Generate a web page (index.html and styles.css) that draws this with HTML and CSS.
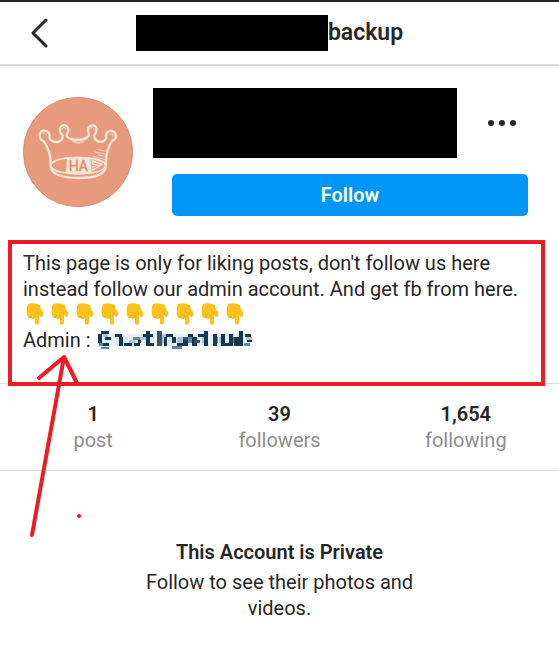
FILE: index.html
```html
<!DOCTYPE html>
<html lang="en">
<head>
    <meta charset="UTF-8">
    <meta name="viewport" content="width=device-width, initial-scale=1.0">
    <title>Profile</title>
    <link rel="stylesheet" href="styles.css">
</head>
<body>
    <header class="topbar">
        <button class="icon-btn back" aria-label="Back">
            <svg width="20" height="30" viewBox="0 0 20 30"><path d="M16 2 L3 15 L16 28" fill="none" stroke="#262626" stroke-width="3" stroke-linecap="round" stroke-linejoin="round"/></svg>
        </button>
        <h1 class="username"><span class="redacted redacted-user"></span>backup</h1>
    </header>

    <main class="profile">
        <section class="intro">
            <svg class="avatar" viewBox="38 38 330 330">
                <circle cx="203" cy="203" r="164" fill="#e89a7c" stroke="#c98369" stroke-width="2"/>
                <g fill="none" stroke="#f6e6d6" stroke-width="7" stroke-linecap="round" stroke-linejoin="round">
                    <path d="M121 240 C122 214 112 188 99 169 C85 166 84 142 99 139 C113 137 120 149 117 160 C124 176 151 178 157 159 C160 151 151 150 149 141 C145 119 173 116 174 136 C174 143 168 148 169 155 C178 170 222 170 236 154 C237 146 232 143 233 134 C237 117 263 121 258 140 C256 148 250 151 252 159 C260 178 281 176 288 160 C284 147 293 138 304 140 C320 143 320 165 306 169 C293 187 287 213 286 238"/>
                    <path d="M121 240 C117 271 158 281 205 281 C253 281 292 270 286 238"/>
                    <path d="M124 237 C139 222 169 220 203 220 C241 220 273 224 284 239" stroke-width="5"/>
                    <path d="M126 251 C140 273 262 276 284 249" stroke-width="5"/>
                </g>
                <path d="M170 219 Q205 215 241 220 L244 265 Q206 272 167 266 Z" fill="#f2e5d4"/>
                <path d="M134 249 Q145 233 164 228 L162 259 Q145 257 134 249 Z" fill="#e89a7c"/>
                <path d="M244 226 L280 240 L246 261 Z" fill="#f2e5d4"/>
                <g fill="none" stroke="#f6e6d6" stroke-width="2" stroke-linecap="round">
                    <path d="M260 195 L285 200 M254 203 L284 209 M264 211 L284 217 M249 217 L283 225 M243 225 L281 233 M180 166 Q204 183 229 164 M187 172 Q206 182 220 172 M94 149 Q102 140 108 153 M154 135 Q162 123 167 136 M241 133 Q249 124 252 138 M298 151 Q307 145 310 156"/>
                </g>
                <path d="M248 235 L270 242 M245 243 L263 246 M246 251 L258 250" stroke="#e89a7c" stroke-width="3"/>
                <text class="avatar-text" x="204" y="260" text-anchor="middle">HA</text>
            </svg>
            <div class="intro-side">
                <div class="name-row">
                    <span class="redacted redacted-name"></span>
                    <button class="icon-btn" aria-label="More options">
                        <svg width="30" height="8" viewBox="0 0 30 8" fill="#262626"><circle cx="4" cy="4" r="3"/><circle cx="15" cy="4" r="3"/><circle cx="26" cy="4" r="3"/></svg>
                    </button>
                </div>
                <button class="follow-btn">Follow</button>
            </div>
        </section>

        <section class="bio">
            <p>This page is only for liking posts, don't follow us here instead follow our admin account. And get fb from here.</p>
            <div class="hands">
                <svg class="hand" viewBox="0 0 18 23">
                    <defs>
                        <g id="hand-down">
                            <path d="M2 1 Q8 -1 14 2 Q14 6 17 9 Q18 12 16 14 Q14 14 13 12 L13 20 Q12 23 9 21 L9 15 Q7 17 5 15 Q2 16 1 12 Q0 5 2 1 Z" fill="#fcc21b"/>
                            <path d="M5 15 L5 12 M9 15 L9 12 M13 12 L12 9" fill="none" stroke="#eaa71c" stroke-width="1"/>
                        </g>
                    </defs>
                    <use href="#hand-down"/>
                </svg>
                <svg class="hand" viewBox="0 0 18 23"><use href="#hand-down"/></svg>
                <svg class="hand" viewBox="0 0 18 23"><use href="#hand-down"/></svg>
                <svg class="hand" viewBox="0 0 18 23"><use href="#hand-down"/></svg>
                <svg class="hand" viewBox="0 0 18 23"><use href="#hand-down"/></svg>
                <svg class="hand" viewBox="0 0 18 23"><use href="#hand-down"/></svg>
                <svg class="hand" viewBox="0 0 18 23"><use href="#hand-down"/></svg>
                <svg class="hand" viewBox="0 0 18 23"><use href="#hand-down"/></svg>
                <svg class="hand" viewBox="0 0 18 23"><use href="#hand-down"/></svg>
            </div>
            <div class="admin">
                <span>Admin :</span>
                <!-- pixelated handle -->
                <svg class="mosaic" width="158" height="22" viewBox="0 0 158 22" shape-rendering="crispEdges">
                    <path fill="#e3f2fa" d="M2 5h152v12h-152z"/>
                    <path fill="#a9c6d8" d="M6 5h5v3h-5zM32 11h6v3h-6zM43 8h6v3h-6zM64 5h5v9h-5zM80 8h6v6h-6zM105 5h5v9h-5zM122 8h5v6h-5zM149 8h6v3h-6z"/>
                    <path fill="#6287a0" d="M2 14h5v3h-5zM4 18h8v2h-8zM36 8h7v3h-7zM75 17h10v3h-10zM91 8h6v6h-6zM116 8h5v6h-5zM132 8h5v6h-5zM147 14h6v3h-6z"/>
                    <path fill="#17364f" d="M4 2h8v3h-8zM1 5h4v9h-4zM8 8h6v3h-6zM6 14h6v3h-6zM18 5h7v3h-7zM22 8h4v9h-4zM27 14h8v3h-8zM37 14h6v3h-6zM41 11h3v3h-3zM49 2h4v15h-4zM46 5h10v3h-10zM53 14h4v3h-4zM69 5h7v3h-7zM67 8h3v9h-3zM75 8h4v6h-4zM80 14h6v3h-6zM86 11h5v6h-5zM91 5h5v3h-5zM95 8h5v9h-5zM101 5h9v3h-9zM107 2h4v15h-4zM116 5h4v12h-4zM124 5h4v12h-4zM128 14h5v3h-5zM132 5h4v12h-4zM137 8h5v9h-5zM142 2h4v15h-4zM148 5h6v3h-6zM150 11h5v2h-5z"/>
                    <path fill="#3f5368" d="M60 2h5v15h-5zM86 8h5v3h-5zM97 11h6v3h-6z"/>
                </svg>
            </div>
            <div class="highlight"></div>
            <svg class="arrow" width="84" height="190" viewBox="0 0 84 190" fill="none" stroke="#ed1c24" stroke-width="4" stroke-linecap="round" stroke-linejoin="round">
                <path d="M32 183 L64 5 M39 26 L64 5 L77 31"/>
                <circle cx="79" cy="164" r="2" fill="#ed1c24" stroke="none"/>
            </svg>
        </section>

        <ul class="stats">
            <li><strong>1</strong>post</li>
            <li><strong>39</strong>followers</li>
            <li><strong>1,654</strong>following</li>
        </ul>

        <section class="private">
            <h2>This Account is Private</h2>
            <p>Follow to see their photos and videos.</p>
        </section>
    </main>
</body>
</html>
```
FILE: styles.css
```css
* {
    box-sizing: border-box;
}
body {
    margin: 0;
    background: #fff;
    color: #262626;
    font-family: Roboto, "Liberation Sans", sans-serif;
    font-size: 20px;
    line-height: 26px;
}
h1, h2, p, ul {
    margin: 0;
    padding: 0;
}
button {
    border: none;
    font-family: inherit;
    cursor: pointer;
}
.icon-btn {
    display: flex;
    padding: 0;
    background: none;
}
.topbar {
    display: flex;
    align-items: center;
    padding: 0 70px 0 30px;
    height: 66px;
    border-top: 2px solid #262224;
    border-bottom: 2px solid #dbdbdb;
}
.username {
    display: flex;
    flex: 1;
    align-items: center;
    justify-content: center;
    font-size: 23px;
    font-weight: 600;
}
.redacted {
    background: #000;
}
.redacted-user {
    width: 192px;
    height: 36px;
}
.intro {
    display: flex;
    align-items: center;
    gap: 20px;
    padding: 22px 31px 12px 23px;
}
.avatar {
    flex: none;
    width: 110px;
    height: 110px;
}
.avatar-text {
    font-size: 42px;
    fill: #e08a6c;
    stroke: #e08a6c;
}
.intro-side {
    flex: 1;
}
.name-row {
    display: flex;
    align-items: center;
    gap: 30px;
    margin-bottom: 16px;
}
.redacted-name {
    flex: 1;
    max-width: 304px;
    height: 70px;
}
.name-row .icon-btn {
    margin-right: 10px;
}
.follow-btn {
    display: block;
    width: calc(100% - 19px);
    height: 42px;
    margin-left: 19px;
    border-radius: 5px;
    background: #0095f6;
    color: #fff;
    font-size: 20px;
    font-weight: 600;
}
.bio {
    position: relative;
    padding: 22px 23px 30px;
}
.hands {
    display: flex;
    align-items: center;
    gap: 7px;
    height: 25px;
    padding-left: 3px;
}
.hand {
    width: 18px;
    height: 23px;
}
.admin {
    display: flex;
    align-items: center;
    gap: 6px;
}
/* red marker box and arrow drawn over the page */
.highlight {
    position: absolute;
    inset: 12px 14px -3px 8px;
    border: 4px solid #ed1c24;
}
.arrow {
    position: absolute;
    top: 124px;
    left: 0;
}
.stats {
    display: flex;
    padding: 17px 0;
    border-top: 1px solid #dbdbdb;
    border-bottom: 1px solid #dbdbdb;
    color: #8e8e8e;
    list-style: none;
    text-align: center;
}
.stats li {
    flex: 1;
}
.stats strong {
    display: block;
    color: #262626;
    font-weight: 600;
}
.private {
    max-width: 320px;
    margin: 0 auto;
    padding: 68px 20px 40px;
    text-align: center;
}
.private h2 {
    margin-bottom: 4px;
    font-size: 20px;
    font-weight: 600;
}
```
